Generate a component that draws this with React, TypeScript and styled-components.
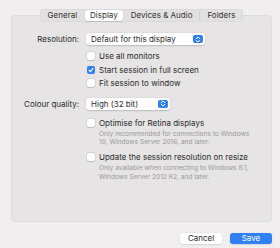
import React from "react";
import styled, { createGlobalStyle } from "styled-components";

const Global = createGlobalStyle`
  html, body { margin: 0; padding: 0; background: #f0eeee; }
  * { box-sizing: border-box; }
`;

const Window = styled.div`
  width: 280px;
  height: 248px;
  background: #f0eeee;
  font-family: Inter, "Liberation Sans", sans-serif;
  color: #2b2b2b;
  padding: 9px 8px 0 11px;
  display: flex;
  flex-direction: column;
  overflow: hidden;
`;

const TabBar = styled.div`
  align-self: center;
  position: relative;
  z-index: 1;
  display: flex;
  align-items: center;
  height: 13px;
  padding: 1px;
  background: #e2e0e0;
  border-radius: 4px;
  box-shadow: inset 0 0 0 0.5px rgba(0, 0, 0, 0.06);
  margin-bottom: -7px;
`;

const Tab = styled.div<{ $active?: boolean; $sep?: boolean }>`
  height: 11px;
  line-height: 11px;
  font-size: 8px;
  padding: 0 ${(p) => (p.$active ? 5 : 7)}px;
  margin: 0 ${(p) => (p.$active ? 1 : 0)}px;
  border-radius: 3px;
  background: ${(p) => (p.$active ? "#ffffff" : "transparent")};
  box-shadow: ${(p) => (p.$active ? "0 0.5px 1px rgba(0,0,0,0.15)" : "none")};
  border-left: ${(p) => (p.$sep ? "1px solid #d2d0d0" : "none")};
  color: #333333;
`;

const Panel = styled.div`
  height: 207px;
  background: #e6e4e4;
  border: 1px solid #dddbdb;
  border-radius: 4px;
  padding-top: 17px;
  display: grid;
  grid-template-columns: 67px 1fr;
  column-gap: 7px;
  align-content: start;
`;

const Label = styled.div<{ $mt?: number }>`
  font-size: 8px;
  text-align: right;
  height: 12px;
  line-height: 12px;
  margin-top: ${(p) => p.$mt ?? 0}px;
`;

const Cell = styled.div<{ $mt?: number }>`
  grid-column: 2;
  margin-top: ${(p) => p.$mt ?? 0}px;
`;

const Popup = styled.div<{ $w: number }>`
  width: ${(p) => p.$w}px;
  height: 12px;
  background: #ffffff;
  border-radius: 3px;
  box-shadow: 0 0.5px 1.5px rgba(0, 0, 0, 0.18);
  display: flex;
  align-items: center;
  justify-content: space-between;
  padding: 0 2px 0 5px;
  font-size: 8px;
`;

const Stepper = styled.div`
  width: 10px;
  height: 8px;
  border-radius: 2px;
  background: #2f7ff6;
  display: flex;
  align-items: center;
  justify-content: center;
`;

const CheckRow = styled.div<{ $mt?: number }>`
  display: flex;
  align-items: center;
  gap: 4px;
  height: 13.5px;
  font-size: 8px;
  margin-top: ${(p) => p.$mt ?? 0}px;
`;

const Box = styled.div<{ $on?: boolean }>`
  width: 8px;
  height: 8px;
  border-radius: 2px;
  flex: none;
  margin-left: 1px;
  background: ${(p) => (p.$on ? "#2f7ff6" : "#ffffff")};
  box-shadow: ${(p) =>
    p.$on ? "none" : "0 0 0 0.5px rgba(0,0,0,0.12), 0 0.5px 1px rgba(0,0,0,0.12)"};
  display: flex;
  align-items: center;
  justify-content: center;
`;

const Desc = styled.div`
  font-size: 6.6px;
  line-height: 8.5px;
  color: #9b9999;
  padding-left: 13px;
  width: 170px;
`;

const Footer = styled.div`
  display: flex;
  justify-content: flex-end;
  gap: 8px;
  margin-top: 11px;
`;

const Button = styled.div<{ $primary?: boolean }>`
  width: 42px;
  height: 11px;
  line-height: 11px;
  text-align: center;
  font-size: 8px;
  border-radius: 3px;
  background: ${(p) => (p.$primary ? "#2f7ff6" : "#ffffff")};
  color: ${(p) => (p.$primary ? "#ffffff" : "#2b2b2b")};
  box-shadow: 0 0.5px 1.5px rgba(0, 0, 0, 0.18);
`;

const StepIcon = () => (
  <Stepper>
    <svg width="6" height="7" viewBox="0 0 6 7" fill="none" stroke="#fff" strokeWidth="1" strokeLinecap="round" strokeLinejoin="round">
      <path d="M1.2 2.6 L3 1 L4.8 2.6" />
      <path d="M1.2 4.4 L3 6 L4.8 4.4" />
    </svg>
  </Stepper>
);

const Check = ({ on, mt, children }: { on?: boolean; mt?: number; children: React.ReactNode }) => (
  <CheckRow $mt={mt}>
    <Box $on={on}>
      {on && (
        <svg width="6" height="6" viewBox="0 0 6 6" fill="none" stroke="#fff" strokeWidth="1.1" strokeLinecap="round" strokeLinejoin="round">
          <path d="M1 3.2 L2.4 4.6 L5 1.4" />
        </svg>
      )}
    </Box>
    <span>{children}</span>
  </CheckRow>
);

export default function App() {
  return (
    <>
      <Global />
      <Window>
        <TabBar>
          <Tab>General</Tab>
          <Tab $active>Display</Tab>
          <Tab>Devices &amp; Audio</Tab>
          <Tab $sep>Folders</Tab>
        </TabBar>
        <Panel>
          <Label>Resolution:</Label>
          <Cell>
            <Popup $w={119}>
              <span>Default for this display</span>
              <StepIcon />
            </Popup>
          </Cell>
          <Cell $mt={4.5}>
            <Check>Use all monitors</Check>
            <Check on>Start session in full screen</Check>
            <Check>Fit session to window</Check>
          </Cell>
          <Label $mt={7.5}>Colour quality:</Label>
          <Cell $mt={7.5}>
            <Popup $w={84}>
              <span>High (32 bit)</span>
              <StepIcon />
            </Popup>
          </Cell>
          <Cell $mt={6.5}>
            <Check>Optimise for Retina displays</Check>
            <Desc>Only recommended for connections to Windows 10, Windows Server 2016, and later.</Desc>
            <Check mt={4}>Update the session resolution on resize</Check>
            <Desc>Only available when connecting to Windows 8.1, Windows Server 2012 R2, and later.</Desc>
          </Cell>
        </Panel>
        <Footer>
          <Button>Cancel</Button>
          <Button $primary>Save</Button>
        </Footer>
      </Window>
    </>
  );
}
